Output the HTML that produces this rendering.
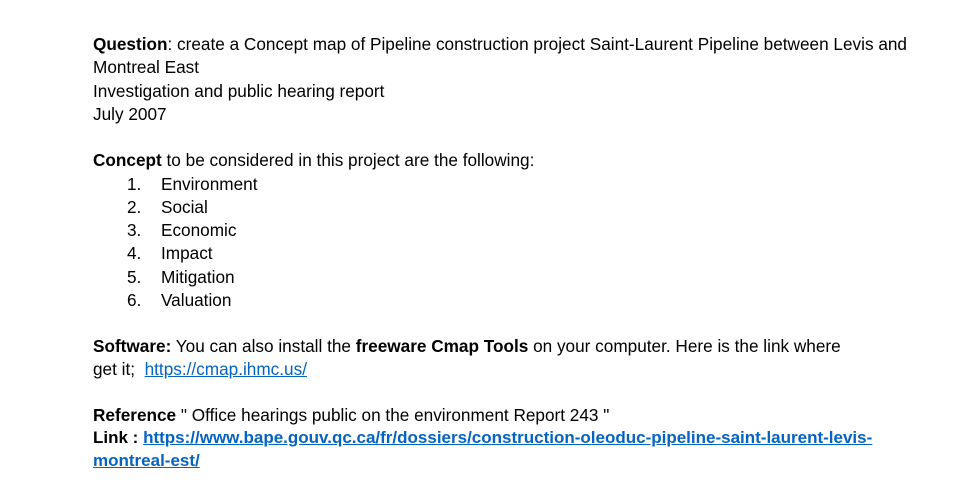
<!DOCTYPE html>
<html><head><meta charset="utf-8"><style>
html,body{margin:0;padding:0;background:#fff;width:965px;height:504px;overflow:hidden}
body{font-family:"Liberation Sans",Arial,sans-serif;font-size:17.2px;color:#000}
.l{position:absolute;left:93px;white-space:nowrap;line-height:20px}
.n{position:absolute;left:127px;line-height:20px}
.t{position:absolute;left:161px;line-height:20px}
a{color:#0563C1;text-decoration:underline}
</style></head><body>
<div class="l" style="top:34px"><b>Question</b>: create a Concept map of Pipeline construction project Saint-Laurent Pipeline between Levis and</div>
<div class="l" style="top:57px">Montreal East</div>
<div class="l" style="top:81px">Investigation and public hearing report</div>
<div class="l" style="top:104px">July 2007</div>
<div class="l" style="top:150px"><b>Concept</b> to be considered in this project are the following:</div>
<div class="n" style="top:174px">1.</div><div class="t" style="top:174px">Environment</div>
<div class="n" style="top:197px">2.</div><div class="t" style="top:197px">Social</div>
<div class="n" style="top:220px">3.</div><div class="t" style="top:220px">Economic</div>
<div class="n" style="top:243px">4.</div><div class="t" style="top:243px">Impact</div>
<div class="n" style="top:267px">5.</div><div class="t" style="top:267px">Mitigation</div>
<div class="n" style="top:290px">6.</div><div class="t" style="top:290px">Valuation</div>
<div class="l" style="top:336px"><b>Software:</b> You can also install the <b>freeware Cmap Tools</b> on your computer. Here is the link where</div>
<div class="l" style="top:359px">get it;&nbsp; <a>https://cmap.ihmc.us/</a></div>
<div class="l" style="top:405px"><b>Reference</b> " Office hearings public on the environment Report 243 "</div>
<div class="l" style="top:428px;font-size:17px"><b>Link : <a>https://www.bape.gouv.qc.ca/fr/dossiers/construction-oleoduc-pipeline-saint-laurent-levis-</a></b></div>
<div class="l" style="top:451px;font-size:17px"><b><a>montreal-est/</a></b></div>
</body></html>
